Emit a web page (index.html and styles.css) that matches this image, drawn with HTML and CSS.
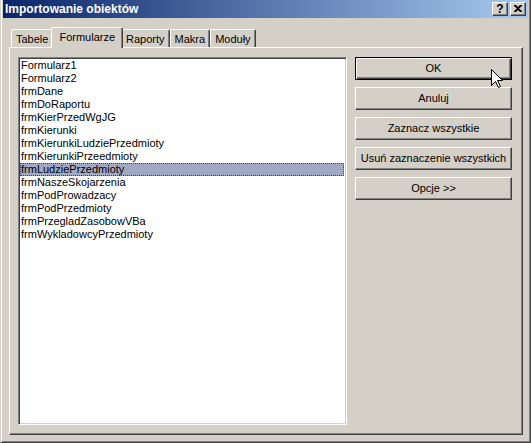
FILE: index.html
```html
<!DOCTYPE html>
<html lang="pl">
<head>
<meta charset="utf-8">
<title>Importowanie obiektów</title>
<link rel="stylesheet" href="styles.css">
</head>
<body>
<div class="window">
  <div class="titlebar">
    <span class="title">Importowanie obiektów</span>
    <div class="tb-buttons">
      <div class="tb-btn help">?</div>
      <div class="tb-btn close">
        <svg width="8" height="7" viewBox="0 0 8 7"><path d="M0 0h2l2 2 2-2h2v1L5 3.5 8 6v1H6L4 5 2 7H0V6l3-2.5L0 1z" fill="#000"/></svg>
      </div>
    </div>
  </div>
  <div class="body">
    <div class="tabs">
      <div class="tab">Tabele</div>
      <div class="tab selected">Formularze</div>
      <div class="tab">Raporty</div>
      <div class="tab">Makra</div>
      <div class="tab">Moduły</div>
    </div>
    <div class="panel">
      <div class="listbox">
        <div class="item">Formularz1</div>
        <div class="item">Formularz2</div>
        <div class="item">frmDane</div>
        <div class="item">frmDoRaportu</div>
        <div class="item">frmKierPrzedWgJG</div>
        <div class="item">frmKierunki</div>
        <div class="item">frmKierunkiLudziePrzedmioty</div>
        <div class="item">frmKierunkiPrzeedmioty</div>
        <div class="item active">frmLudziePrzedmioty</div>
        <div class="item">frmNaszeSkojarzenia</div>
        <div class="item">frmPodProwadzacy</div>
        <div class="item">frmPodPrzedmioty</div>
        <div class="item">frmPrzegladZasobowVBa</div>
        <div class="item">frmWykladowcyPrzedmioty</div>
      </div>
      <div class="buttons">
        <div class="btn default">OK</div>
        <div class="btn">Anuluj</div>
        <div class="btn">Zaznacz wszystkie</div>
        <div class="btn">Usuń zaznaczenie wszystkich</div>
        <div class="btn">Opcje &gt;&gt;</div>
      </div>
    </div>
  </div>
  <svg class="cursor" width="13" height="20" viewBox="0 0 13 20">
    <path d="M0.5 0.5 L0.5 16.5 L4.5 12.5 L7.5 18.5 L9.5 17.5 L6.5 11.5 L11.5 11.5 Z" fill="#fff" stroke="#000" stroke-width="1" stroke-linejoin="miter"/>
  </svg>
</div>
</body>
</html>
```
FILE: styles.css
```css
html, body {
  margin: 0;
  padding: 0;
  background: #d4d0c8;
}
body {
  font-family: "Liberation Sans", Arial, sans-serif;
  font-size: 11px;
  color: #000;
}
.window {
  position: relative;
  width: 531px;
  height: 443px;
  box-sizing: border-box;
  background: #d4d0c8;
  border-left: 1px solid #d4d0c8;
  border-right: 1px solid #404040;
  border-bottom: 1px solid #404040;
  box-shadow: inset 1px 0 #fff, inset -1px -1px #808080;
  padding: 0 2px 2px 2px;
  display: flex;
  flex-direction: column;
}
.titlebar {
  height: 18px;
  flex: none;
  background: linear-gradient(to right, #0a246a, #a6caf0);
  display: flex;
  align-items: center;
  justify-content: space-between;
  padding: 0 2px 0 2px;
}
.title {
  color: #fff;
  font-weight: bold;
  font-size: 12px;
}
.tb-buttons {
  display: flex;
  gap: 2px;
}
.tb-btn {
  width: 16px;
  height: 14px;
  box-sizing: border-box;
  background: #d4d0c8;
  border-top: 1px solid #fff;
  border-left: 1px solid #fff;
  border-right: 1px solid #404040;
  border-bottom: 1px solid #404040;
  box-shadow: inset -1px -1px #808080;
  display: flex;
  align-items: center;
  justify-content: center;
  font-weight: bold;
  font-size: 12px;
  line-height: 12px;
}
.tb-btn.close svg {
  display: block;
  margin-top: -1px;
}
.body {
  flex: 1;
  display: flex;
  flex-direction: column;
  padding: 9px 5px 5px 6px;
}
.tabs {
  display: flex;
  align-items: flex-end;
  height: 20px;
  padding-left: 2px;
  position: relative;
  z-index: 1;
}
.tab {
  height: 18px;
  box-sizing: border-box;
  padding: 2px 4px 0 4px;
  border-top: 1px solid #fff;
  border-left: 1px solid #fff;
  border-right: 1px solid #404040;
  box-shadow: inset -1px 0 #808080;
  border-radius: 2px 2px 0 0;
  line-height: 14px;
  background: #d4d0c8;
}
.tab.selected {
  height: 21px;
  margin: 0 -2px -1px -2px;
  padding: 2px 7px 0 7px;
  position: relative;
}
.panel {
  flex: 1;
  display: flex;
  align-items: flex-start;
  gap: 8px;
  box-sizing: border-box;
  border-top: 1px solid #fff;
  border-left: 1px solid #fff;
  border-right: 1px solid #404040;
  border-bottom: 1px solid #404040;
  box-shadow: inset -1px -1px #808080;
  padding: 9px 8px 7px 8px;
}
.listbox {
  width: 329px;
  height: 368px;
  box-sizing: border-box;
  background: #fff;
  border-top: 1px solid #808080;
  border-left: 1px solid #808080;
  border-right: 1px solid #fff;
  border-bottom: 1px solid #fff;
  box-shadow: inset 1px 1px #404040, inset -1px -1px #d4d0c8;
  padding: 1px 2px 1px 1px;
}
.item {
  height: 13px;
  line-height: 13px;
  padding-left: 1px;
  white-space: nowrap;
  box-sizing: border-box;
}
.item.active {
  background: #a0a8c4;
  outline: 1px dotted #404040;
  outline-offset: -1px;
}
.buttons {
  width: 157px;
  display: flex;
  flex-direction: column;
  gap: 7px;
}
.btn {
  height: 23px;
  box-sizing: border-box;
  background: #d4d0c8;
  border-top: 1px solid #fff;
  border-left: 1px solid #fff;
  border-right: 1px solid #404040;
  border-bottom: 1px solid #404040;
  box-shadow: inset -1px -1px #808080;
  display: flex;
  align-items: center;
  justify-content: center;
  padding-bottom: 1px;
}
.btn.default {
  border: 1px solid #000;
  box-shadow: inset 1px 1px #fff, inset -1px -1px #404040, inset -2px -2px #808080;
}
.cursor {
  position: absolute;
  left: 490px;
  top: 69px;
}
```
